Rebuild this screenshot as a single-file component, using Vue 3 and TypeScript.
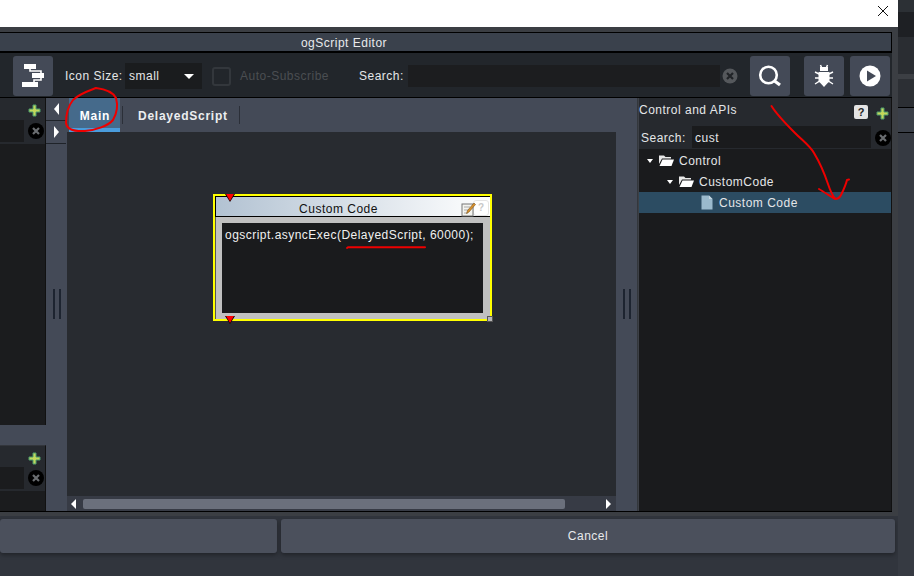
<script setup lang="ts">
interface TreeRow { label: string; depth: number; kind: 'folder' | 'file'; selected?: boolean }
const rows: TreeRow[] = [
  { label: 'Control', depth: 0, kind: 'folder' },
  { label: 'CustomCode', depth: 1, kind: 'folder' },
  { label: 'Custom Code', depth: 2, kind: 'file', selected: true },
]
</script>

<template>
  <div class="page">
    <div class="window">
      <div class="titlebar">
        <svg class="close" width="12" height="12" viewBox="0 0 12 12"><path d="M1 1L11 11M11 1L1 11" stroke="#111" stroke-width="1" fill="none" /></svg>
      </div>
      <div class="dialog">
        <div class="dialog-title">ogScript Editor</div>
        <div class="toolbar">
          <button class="tool tool-flow">
            <svg width="24" height="26" viewBox="0 0 24 26">
              <rect x="3" y="1" width="12" height="5" fill="#fff" />
              <rect x="11" y="10" width="12" height="5" fill="#fff" />
              <rect x="1" y="19" width="16" height="5" fill="#fff" />
              <path d="M9 6V8H20V10M20 15V17H13V19" stroke="#fff" stroke-width="1.6" fill="none" />
            </svg>
          </button>
          <span class="tb-label icon-size">Icon Size:</span>
          <div class="select"><span>small</span><i class="caret"></i></div>
          <span class="check"></span>
          <span class="disabled">Auto-Subscribe</span>
          <span class="tb-label search-label">Search:</span>
          <div class="tb-input"></div>
          <svg class="tb-clear" width="16" height="16" viewBox="0 0 16 16">
            <circle cx="8" cy="8" r="7.5" fill="#55585c" />
            <path d="M5 5L11 11M11 5L5 11" stroke="#202327" stroke-width="2.2" />
          </svg>
          <button class="tool tool-search">
            <svg width="30" height="30" viewBox="0 0 30 30">
              <circle cx="13.500" cy="14" r="8.300" fill="none" stroke="#fff" stroke-width="2.600" />
              <path d="M19.500 20L25 24" stroke="#fff" stroke-width="3.200" />
            </svg>
          </button>
          <button class="tool tool-bug">
            <svg width="24" height="26" viewBox="0 0 24 26">
              <path d="M8.500 2L9.500 4.500M15.500 2L14.500 4.500" stroke="#fff" stroke-width="1.500" />
              <path d="M8 4H16V8H8Z" fill="#fff" />
              <path d="M6.500 9H17.500V18L12 24L6.500 18Z" fill="#fff" />
              <path d="M3 9L7 11H17L21 9M3 15H21M3 21L7 18.500H17L21 21" stroke="#fff" stroke-width="1.400" fill="none" />
            </svg>
          </button>
          <button class="tool tool-play">
            <svg width="24" height="24" viewBox="0 0 24 24">
              <circle cx="12" cy="12" r="10.500" fill="#fff" />
              <path d="M9 6.500L18 12L9 17.500Z" fill="#444a57" />
            </svg>
          </button>
        </div>

        <div class="body">
          <div class="left-col">
            <section class="left-panel top-panel">
              <div class="left-head">
                <svg class="plus" width="13" height="13" viewBox="0 0 13 13"><path d="M5 1H8V5H12V8H8V12H5V8H1V5H5Z" fill="#c2d75a" stroke="#4d9c6c" /></svg>
              </div>
              <div class="left-search">
                <div class="left-input"></div>
                <svg width="16" height="16" viewBox="0 0 16 16" class="clear"><circle cx="8" cy="8" r="8" fill="#000" /><path d="M5 5L11 11M11 5L5 11" stroke="#6a6d70" stroke-width="2.200" /></svg>
              </div>
              <div class="left-list"></div>
            </section>
            <section class="left-panel bottom-panel">
              <div class="left-head">
                <svg class="plus" width="13" height="13" viewBox="0 0 13 13"><path d="M5 1H8V5H12V8H8V12H5V8H1V5H5Z" fill="#c2d75a" stroke="#4d9c6c" /></svg>
              </div>
              <div class="left-search">
                <div class="left-input"></div>
                <svg width="16" height="16" viewBox="0 0 16 16" class="clear"><circle cx="8" cy="8" r="8" fill="#000" /><path d="M5 5L11 11M11 5L5 11" stroke="#6a6d70" stroke-width="2.200" /></svg>
              </div>
              <div class="left-list"></div>
            </section>
          </div>

          <div class="split split-left">
            <div class="scrollers">
              <div class="scroller"><i class="arrow-left"></i></div>
              <div class="scroller"><i class="arrow-right"></i></div>
            </div>
            <div class="grip"></div>
          </div>

          <div class="center">
            <div class="tabs">
              <div class="tab active">Main</div>
              <div class="tab">DelayedScript</div>
            </div>
            <div class="canvas">
              <div class="node">
                <div class="node-title">
                  <span class="node-name">Custom Code</span>
                  <span class="node-help">?</span>
                  <svg class="node-edit" width="15" height="15" viewBox="0 0 15 15">
                    <rect x="1" y="2" width="11" height="12" fill="#f4f4f0" stroke="#777" />
                    <path d="M3 5H9M3 8H8M3 11H7" stroke="#aaa" />
                    <path d="M13 1L14.500 2.500L8 10L5.500 11.500L6.500 8.500Z" fill="#d9912c" stroke="#7a5420" stroke-width=".6" />
                  </svg>
                </div>
                <div class="node-body">
                  <div class="code">ogscript.asyncExec(DelayedScript, 60000);</div>
                </div>
                <i class="pin pin-top"></i>
                <i class="pin pin-bottom"></i>
                <i class="resize"></i>
              </div>
            </div>
            <div class="hscroll">
              <i class="arrow-left small"></i>
              <div class="track"><div class="thumb"></div></div>
              <i class="arrow-right small"></i>
            </div>
          </div>

          <div class="split split-right">
            <div class="grip"></div>
          </div>

          <section class="right-panel">
            <div class="right-head">
              <span class="right-title">Control and APIs</span>
              <span class="help">?</span>
              <svg class="plus" width="13" height="13" viewBox="0 0 13 13"><path d="M5 1H8V5H12V8H8V12H5V8H1V5H5Z" fill="#c2d75a" stroke="#4d9c6c" /></svg>
            </div>
            <div class="right-search">
              <span>Search:</span>
              <div class="right-input">cust</div>
              <svg class="clear" width="16" height="16" viewBox="0 0 16 16"><circle cx="8" cy="8" r="8" fill="#000" /><path d="M5 5L11 11M11 5L5 11" stroke="#6a6d70" stroke-width="2.200" /></svg>
            </div>
            <div class="tree">
              <div v-for="row in rows" :key="row.label" class="tree-row" :class="[`depth-${row.depth}`, { selected: row.selected }]">
                <i v-if="row.kind === 'folder'" class="tree-caret"></i>
                <svg v-if="row.kind === 'folder'" class="tree-icon" width="15" height="13" viewBox="0 0 15 13">
                  <path d="M0 1.500H5L6.500 3H12V4.500H3L0 10Z" fill="#e8e8e8" />
                  <path d="M3.500 5.500H15L12.500 12H0.500Z" fill="#fff" />
                </svg>
                <svg v-else class="tree-icon" width="12" height="15" viewBox="0 0 12 15">
                  <path d="M0.500 0.500H8L11.500 4V14.500H0.500Z" fill="#9bbacd" />
                  <path d="M8 0.500V4H11.500" fill="#c5d7e2" />
                </svg>
                <span>{{ row.label }}</span>
              </div>
            </div>
          </section>
        </div>
      </div>
      <div class="actions">
        <button class="action ok"></button>
        <button class="action cancel">Cancel</button>
      </div>
    </div>
    <div class="backdrop">
      <div class="b1"></div><div class="b2"></div><div class="b3"></div><div class="b4"></div><div class="b5"></div><div class="b6"></div><div class="b7"></div>
    </div>

    <svg class="ink" width="914" height="576" viewBox="0 0 914 576">
      <g fill="none" stroke="#ee0000" stroke-width="2" stroke-linecap="round" stroke-linejoin="round">
        <path d="M96 88C104 89 113 92 116 98C118 105 117 113 113 120C108 126 96 130 85 131C76 131.500 67 130 66 123C66 114 69 105 73 100C79 94 88 91 96 88" />
        <path d="M347 248L348 247.300H425" />
        <path d="M771.500 106C777 115 786 124 795 133C803 141 810 146 814 153C820 163 825 175 828 184C830 190 832 195 835 198.500M819 189C824 192 830 196 835 199C838 199 840 197 841 195C844 189 846 184 847 180L849 179.500" />
      </g>
    </svg>
  </div>
</template>

<style>
html, body { margin: 0; padding: 0; background: #30343c; }
</style>

<style scoped>
.page {
  position: relative;
  width: 914px;
  height: 576px;
  overflow: hidden;
  display: flex;
  background: #31353d;
  font-family: "Liberation Sans", Arial, sans-serif;
  font-size: 12px;
  letter-spacing: 0.5px;
  color: #e4e6e8;
}
.window { width: 898px; flex: none; display: flex; flex-direction: column; }
.titlebar {
  height: 27px;
  flex: none;
  background: #fff;
  display: flex;
  justify-content: flex-end;
  align-items: center;
  padding-right: 9px;
  box-sizing: border-box;
}
.close { margin-top: -5px; }
.dialog {
  height: 489px;
  flex: none;
  box-sizing: border-box;
  background: #3b3e43;
  padding: 5px 6px 5px 0;
  display: flex;
  flex-direction: column;
}
.dialog-title {
  height: 18px;
  flex: none;
  background: #3a414c;
  border-top: 1px solid #000;
  border-bottom: 1px solid #000;
  border-right: 1px solid #000;
  text-align: center;
  line-height: 21px;
  color: #e8eaec;
  padding-right: 203px;
}
.toolbar {
  height: 45px;
  flex: none;
  box-sizing: border-box;
  background: #22262b;
  border-top: 1px solid #000;
  padding-top: 2px;
  display: flex;
  align-items: center;
}
.tool {
  width: 40px;
  height: 40px;
  flex: none;
  padding: 0;
  border: 0;
  background: #444a57;
  border-radius: 3px;
  display: flex;
  align-items: center;
  justify-content: center;
}
.tool-flow { margin-left: 13px; }
.tb-label { color: #e4e6e8; white-space: nowrap; }
.icon-size { margin-left: 12px; width: 57px; flex: none; }
.select {
  width: 77px;
  height: 26px;
  flex: none;
  margin-left: 3px;
  background: #1a1c1e;
  display: flex;
  align-items: center;
  justify-content: space-between;
  padding: 0 8px 0 4px;
  box-sizing: border-box;
}
.caret {
  width: 0;
  height: 0;
  border-left: 5px solid transparent;
  border-right: 5px solid transparent;
  border-top: 5px solid #fff;
}
.check {
  width: 19px;
  height: 19px;
  flex: none;
  margin-left: 10px;
  box-sizing: border-box;
  border: 2px solid #33373c;
  border-radius: 3px;
}
.disabled { margin-left: 9px; color: #4b4e52; width: 119px; flex: none; white-space: nowrap; }
.search-label { width: 49px; flex: none; }
.tb-input { width: 312px; height: 22px; flex: none; background: #1c1d1f; }
.tb-clear { margin-left: 2px; flex: none; }
.tool-search { margin-left: 12px; }
.tool-bug { margin-left: 14px; }
.tool-play { margin-left: 6px; }

.body { height: 413px; flex: none; display: flex; border-top: 1px solid #000; border-bottom: 1px solid #000; margin-bottom: -1px; }
.left-col {
  width: 46px;
  flex: none;
  display: flex;
  flex-direction: column;
  justify-content: space-between;
  background: #444a57;
}
.left-panel {
  display: flex;
  flex-direction: column;
  box-sizing: border-box;
  background: #26292e;
  border-right: 1px solid #111;
}
.top-panel { height: 327px; }
.bottom-panel { height: 66px; border-top: 1px solid #33363c; }
.left-head { height: 22px; flex: none; display: flex; justify-content: flex-end; align-items: flex-start; padding-right: 4px; }
.left-head .plus { margin-top: 6px; flex: none; }
.bottom-panel .left-head { height: 21px; }
.left-search { height: 24px; flex: none; display: flex; align-items: flex-start; justify-content: space-between; padding-right: 1px; }
.left-input { width: 24px; height: 22px; background: #1b1c1e; }
.left-search .clear { margin-top: 3px; flex: none; }
.left-list { flex: 1; background: #1b1c1e; }

.split { flex: none; background: #444a57; position: relative; display: flex; align-items: center; justify-content: center; }
.split-left { width: 21px; }
.split-right { width: 22px; border-right: 1px solid #33373c; box-sizing: border-box; }
.scrollers { position: absolute; left: 0; top: 0; width: 20px; }
.scroller {
  height: 22px;
  border-bottom: 1px solid #1f2329;
  display: flex;
  align-items: center;
  justify-content: center;
}
.grip {
  width: 4px;
  height: 30px;
  border-left: 2px solid #1d2430;
  border-right: 2px solid #1d2430;
  position: relative;
  top: -1px;
}
.arrow-left, .arrow-right { display: block; width: 0; height: 0; border-top: 6px solid transparent; border-bottom: 6px solid transparent; }
.arrow-left { border-right: 5px solid #fff; }
.arrow-right { border-left: 5px solid #fff; }

.center { width: 549px; flex: none; display: flex; flex-direction: column; background: #282b30; }
.tabs { height: 34px; flex: none; background: #444a57; display: flex; padding-left: 2px; box-sizing: border-box; }
.tab {
  height: 34px;
  box-sizing: border-box;
  font-weight: 700;
  letter-spacing: 0.75px;
  line-height: 37px;
  color: #eceef0;
  position: relative;
}
.tab.active { width: 51px; text-align: center; padding: 0 0 0 1px; background: #456a8b; border-bottom: 4px solid #4a9cdc; color: #fff; margin-right: 3px; }
.tab:not(.active) { width: 117px; padding: 0 0 0 15px; }
.tab::after { content: ""; position: absolute; right: 0; top: 8px; height: 18px; width: 1px; background: #2b2f38; }
.tab.active::after { right: -3px; }
.canvas { flex: 1; position: relative; overflow: hidden; }
.node {
  position: absolute;
  left: 146px;
  top: 62px;
  width: 279px;
  height: 127px;
  box-sizing: border-box;
  border: 2px solid #ffff00;
  display: flex;
  flex-direction: column;
  background: #c0c0c0;
}
.node-title {
  height: 21px;
  flex: none;
  box-sizing: border-box;
  border-top: 1px solid #000;
  border-bottom: 1px solid #000;
  border-left: 1px solid #000;
  background: linear-gradient(90deg, #b2c2d2, #fff);
  color: #111;
  line-height: 24px;
  text-align: center;
  position: relative;
}
.node-name { margin-right: 29px; }
.node-edit { position: absolute; left: 245px; top: 5px; }
.node-help {
  position: absolute;
  left: 257px;
  top: 3px;
  width: 16px;
  height: 16px;
  box-sizing: border-box;
  border: 1px solid #e4e4e4;
  border-radius: 3px;
  background: #fff;
  color: #c8c8c8;
  font-size: 10px;
  line-height: 14px;
  font-weight: 700;
  letter-spacing: 0;
}
.node-body { flex: 1; padding: 6px 7px 6px 6px; border-left: 1px solid #555; min-height: 0; }
.code {
  height: 100%;
  background: #1a1b1d;
  color: #f0f0f0;
  padding: 4px 3px 3px;
  box-sizing: border-box;
  line-height: 16px;
  white-space: nowrap;
  letter-spacing: 0.475px;
}
.pin {
  position: absolute;
  width: 0;
  height: 0;
  border-left: 5.500px solid transparent;
  border-right: 5.500px solid transparent;
  border-top: 8px solid #000;
}
.pin::after {
  content: "";
  position: absolute;
  left: -4.500px;
  top: -8px;
  border-left: 4.500px solid transparent;
  border-right: 4.500px solid transparent;
  border-top: 7px solid #f00;
}
.pin-top { left: 10px; top: -2px; }
.pin-bottom { left: 10px; top: 120px; }
.resize { position: absolute; right: -3px; bottom: -3px; width: 4px; height: 4px; background: #b8b8b8; border: 1px solid #555; }
.hscroll {
  height: 15px;
  flex: none;
  background: #373b45;
  display: flex;
  align-items: center;
  padding: 0 5px 0 4px;
  box-sizing: border-box;
}
.arrow-left.small, .arrow-right.small { border-top-width: 5px; border-bottom-width: 5px; flex: none; }
.track { flex: 1; margin-left: 7px; }
.thumb { width: 482px; height: 10px; background: #6b707c; border-radius: 2px; }

.right-panel {
  width: 254px;
  flex: none;
  display: flex;
  flex-direction: column;
  background: #26292e;
  border-right: 1px solid #111;
  box-sizing: border-box;
  border-left: 1px solid #3d4047;
}
.right-head { height: 28px; flex: none; display: flex; align-items: flex-start; position: relative; }
.right-title { margin-top: 4px; line-height: 16px; flex: 1; }
.help {
  width: 14px;
  height: 14px;
  flex: none;
  margin: 7px 8px 0 0;
  background: #e4e4e4;
  border-radius: 2px;
  color: #222;
  font-weight: 700;
  font-size: 11px;
  line-height: 14px;
  text-align: center;
  letter-spacing: 0;
}
.right-head .plus { margin: 9px 2px 0 0; flex: none; }
.right-search { height: 22px; flex: none; display: flex; align-items: center; padding-left: 2px; }
.right-search span { width: 51px; flex: none; margin-top: 2px; }
.right-search .clear { flex: none; margin-top: 2px; }
.right-input {
  width: 179px;
  height: 22px;
  background: #1a1b1d;
  line-height: 24px;
  padding-left: 3px;
  box-sizing: border-box;
  flex: none;
  margin-right: 4px;
}
.tree { flex: 1; background: #1a1b1d; padding-top: 1px; margin-top: 1px; }
.tree-row { height: 21px; display: flex; align-items: center; position: relative; }
.tree-row.selected { background: #2c4c62; }
.depth-0 { padding-left: 8px; }
.depth-1 { padding-left: 28px; }
.depth-2 { padding-left: 62px; }
.tree-caret { width: 0; height: 0; border-left: 3px solid transparent; border-right: 3px solid transparent; border-top: 4px solid #fff; margin-right: 6px; flex: none; }
.tree-icon { flex: none; margin-right: 5px; }
.depth-2 .tree-icon { margin-right: 6px; }

.actions { flex: 1; display: flex; gap: 4px; padding: 3px 3px 23px 0; box-sizing: border-box; align-items: flex-start; }
.action {
  height: 34px;
  border: 0;
  padding: 0;
  background: #4b505c;
  border-radius: 3px;
  box-shadow: 0 2px 4px rgba(0, 0, 0, .35);
  color: #e8eaec;
  font: inherit;
  letter-spacing: 0.5px;
}
.ok { width: 277px; }
.cancel { width: 614px; }

.backdrop { flex: 1; display: flex; flex-direction: column; }
.b1 { height: 12px; background: #2c3035; }
.b2 { height: 25px; background: #1e2024; }
.b3 { height: 37px; background: #2a2d32; }
.b4 { height: 5px; background: #3c3f44; }
.b5 { height: 28px; background: #2c2f34; border-bottom: 1px solid #000; }
.b6 { height: 24px; background: #3a3f48; border-bottom: 1px solid #000; }
.b7 { flex: 1; background: #363a42; }

.ink { position: absolute; left: 0; top: 0; pointer-events: none; }
</style>
